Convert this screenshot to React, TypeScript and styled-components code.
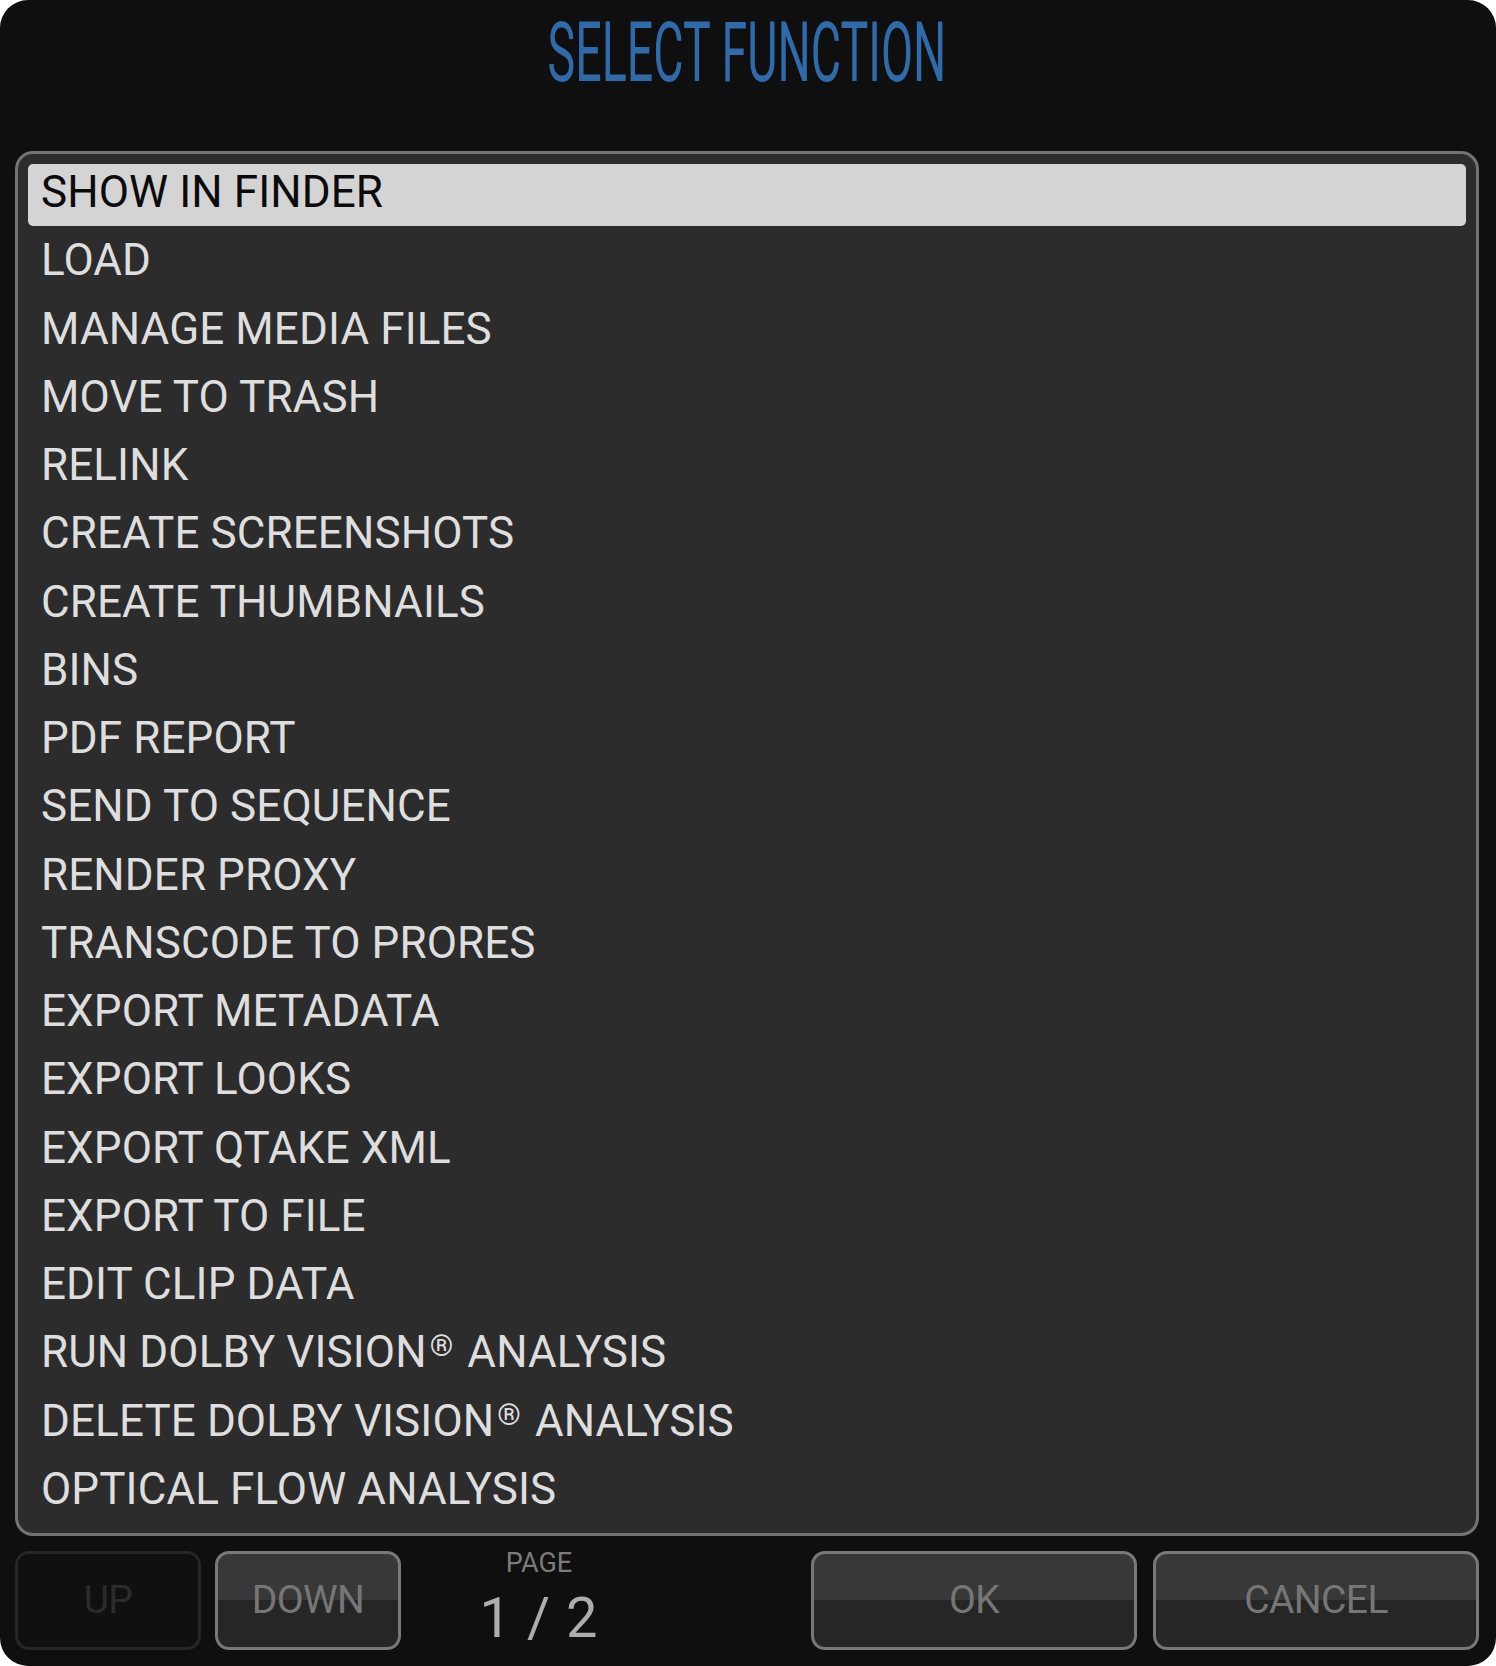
import React from 'react';
import styled, { createGlobalStyle } from 'styled-components';

const GlobalStyle = createGlobalStyle`
    body {
        margin: 0;
        background: #ffffff;
    }
`;

const Dialog = styled.div`
    width: 1496px;
    height: 1666px;
    box-sizing: border-box;
    padding: 0 17px 16px 15px;
    background: #0f0f0f;
    border-radius: 28px;
    display: flex;
    flex-direction: column;
    font-family: Roboto, "Liberation Sans", sans-serif;
    overflow: hidden;
`;

const Header = styled.header`
    height: 151px;
    display: flex;
    justify-content: center;
`;

const Title = styled.h1`
    margin: 11px 0 0;
    font-size: 83px;
    line-height: 83px;
    font-weight: 400;
    color: #2f6bab;
    transform: scaleX(0.562);
    white-space: nowrap;
`;

const Panel = styled.section`
    height: 1385px;
    box-sizing: border-box;
    border: 3px solid #737373;
    border-radius: 18px;
    background: #2c2c2c;
    padding: 10px 10px;
    display: flex;
    flex-direction: column;
    gap: 6.26px;
`;

const Row = styled.div<{ $active?: boolean }>`
    height: 62px;
    flex: 0 0 62px;
    line-height: 57px;
    padding-left: 13px;
    border-radius: 5px;
    font-size: 44px;
    letter-spacing: 0.1px;
    white-space: nowrap;
    background: ${p => (p.$active ? '#d4d4d4' : 'transparent')};
    color: ${p => (p.$active ? '#0b0b0b' : '#dedede')};
`;

const Mark = styled.span`
    font-size: 0.68em;
    line-height: 0;
    vertical-align: 0.36em;
    margin: 0 3px 0 3px;
`;

const Footer = styled.footer`
    margin-top: 15px;
    height: 99px;
    display: flex;
`;

const Button = styled.button<{ $width: number; $disabled?: boolean }>`
    width: ${p => p.$width}px;
    height: 99px;
    box-sizing: border-box;
    border-radius: 14px;
    border: 3px solid ${p => (p.$disabled ? '#262626' : '#787878')};
    background: ${p =>
        p.$disabled ? '#101010' : 'linear-gradient(#383838 50%, #262626 50%)'};
    color: ${p => (p.$disabled ? '#2b2b2b' : '#767676')};
    font-family: Roboto, "Liberation Sans", sans-serif;
    font-size: 39px;
    line-height: 1;
    letter-spacing: -0.6px;
    padding: 0;
    display: flex;
    align-items: center;
    justify-content: center;
`;

const Group = styled.div<{ $gap: number }>`
    display: flex;
    gap: ${p => p.$gap}px;
`;

const PageBox = styled.div`
    width: 276px;
    display: flex;
    flex-direction: column;
    align-items: center;
`;

const PageLabel = styled.span`
    margin-top: -2px;
    font-size: 27px;
    line-height: 28px;
    color: #7b7b7b;
`;

const PageCount = styled.span`
    margin-top: 13px;
    font-size: 56px;
    line-height: 56px;
    color: #adadad;
    letter-spacing: 1px;
`;

const Spacer = styled.div`
    flex: 1;
`;

const items = [
    'SHOW IN FINDER',
    'LOAD',
    'MANAGE MEDIA FILES',
    'MOVE TO TRASH',
    'RELINK',
    'CREATE SCREENSHOTS',
    'CREATE THUMBNAILS',
    'BINS',
    'PDF REPORT',
    'SEND TO SEQUENCE',
    'RENDER PROXY',
    'TRANSCODE TO PRORES',
    'EXPORT METADATA',
    'EXPORT LOOKS',
    'EXPORT QTAKE XML',
    'EXPORT TO FILE',
    'EDIT CLIP DATA',
    'RUN DOLBY VISION® ANALYSIS',
    'DELETE DOLBY VISION® ANALYSIS',
    'OPTICAL FLOW ANALYSIS',
];

// renders the ® sign raised and smaller, as on the device
const label = (text: string) => {
    const parts = text.split('®');
    if (parts.length === 1) return text;
    return (
        <>
            {parts[0]}
            <Mark>®</Mark>
            {parts[1]}
        </>
    );
};

export default function App(): JSX.Element {
    return (
        <>
            <GlobalStyle />
            <Dialog>
                <Header>
                    <Title>SELECT FUNCTION</Title>
                </Header>
                <Panel>
                    {items.map((item, i) => (
                        <Row key={item} $active={i === 0}>{label(item)}</Row>
                    ))}
                </Panel>
                <Footer>
                    <Group $gap={14}>
                        <Button $width={186} $disabled>UP</Button>
                        <Button $width={186}>DOWN</Button>
                    </Group>
                    <PageBox>
                        <PageLabel>PAGE</PageLabel>
                        <PageCount>1 / 2</PageCount>
                    </PageBox>
                    <Spacer />
                    <Group $gap={16}>
                        <Button $width={326}>OK</Button>
                        <Button $width={326}>CANCEL</Button>
                    </Group>
                </Footer>
            </Dialog>
        </>
    );
}
